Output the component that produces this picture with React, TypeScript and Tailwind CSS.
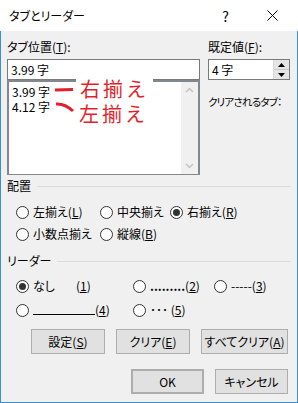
import React from "react";

const font = { fontFamily: '"Noto Sans CJK JP", "Noto Sans", sans-serif' };

function Radio({ checked = false }: { checked?: boolean }) {
  return (
    <span className="flex h-[13px] w-[13px] shrink-0 items-center justify-center rounded-full border border-[#333] bg-white">
      {checked && <span className="h-[7px] w-[7px] rounded-full bg-[#333]" />}
    </span>
  );
}

function Opt({ checked, children, className = "" }: { checked?: boolean; children: React.ReactNode; className?: string }) {
  return (
    <div className={`flex items-center gap-[4px] ${className}`}>
      <Radio checked={checked} />
      <span className="whitespace-nowrap">{children}</span>
    </div>
  );
}

function Btn({ children, className = "" }: { children: React.ReactNode; className?: string }) {
  return (
    <div className={`flex h-[25px] items-center justify-center whitespace-nowrap border border-[#adadad] bg-[#e1e1e1] ${className}`}>
      {children}
    </div>
  );
}

export default function App() {
  return (
    <div
      className="h-[403px] w-[298px] overflow-hidden bg-white text-[12px] leading-[16px] text-black [font-feature-settings:'palt']"
      style={font}
    >
      {/* === TITLE BAR === */}
      <div className="flex h-[31px] items-center bg-white pl-[9px]">
        <span className="text-[12px]">タブとリーダー</span>
        <span className="ml-auto mr-[38px] text-[14px]">?</span>
        <svg width="11" height="11" viewBox="0 0 11 11" className="mr-[20px]">
          <path d="M0.5 0.5 L10.5 10.5 M10.5 0.5 L0.5 10.5" stroke="#000" strokeWidth="1" />
        </svg>
      </div>

      {/* === BODY === */}
      <div className="relative h-[372px] border-x border-b border-[#3a8fd0] bg-[#f0f0f0] px-[6px]">
        <div className="flex pt-[8px]">
          {/* tab position */}
          <div className="w-[193px]">
            <div>
              タブ位置(<u>T</u>):
            </div>
            <div className="mt-[4px] flex h-[21px] items-center border border-[#7a7a7a] bg-white pl-[3px]">3.99 字</div>
            <div className="flex h-[95px] border-2 border-b border-[#828790] bg-white">
              <div className="flex-1 pl-[3px] pt-[2px] leading-[15px]">
                <div>3.99 字</div>
                <div>4.12 字</div>
              </div>
              <div className="flex w-[17px] flex-col items-center justify-between bg-[#f0f0f0] py-[5px]">
                <svg width="9" height="6" viewBox="0 0 9 6">
                  <path d="M1 5 L4.5 1.5 L8 5" stroke="#c2c2c2" strokeWidth="1.5" fill="none" />
                </svg>
                <svg width="9" height="6" viewBox="0 0 9 6">
                  <path d="M1 1 L4.5 4.5 L8 1" stroke="#c2c2c2" strokeWidth="1.5" fill="none" />
                </svg>
              </div>
            </div>
          </div>

          {/* default value */}
          <div className="ml-[8px] w-[82px]">
            <div>
              既定値(<u>F</u>):
            </div>
            <div className="mt-[4px] flex h-[21px] items-center border border-[#7a7a7a] bg-white pl-[3px]">
              <span className="flex-1">4 字</span>
              <div className="flex h-full w-[16px] flex-col border-l border-[#d9d9d9]">
                <div className="flex flex-1 items-center justify-center border-b border-[#c9c9c9] bg-[#e5e5e5]">
                  <svg width="7" height="4" viewBox="0 0 7 4">
                    <path d="M0 4 L3.5 0 L7 4Z" fill="#000" />
                  </svg>
                </div>
                <div className="flex flex-1 items-center justify-center bg-[#e5e5e5]">
                  <svg width="7" height="4" viewBox="0 0 7 4">
                    <path d="M0 0 L3.5 4 L7 0Z" fill="#000" />
                  </svg>
                </div>
              </div>
            </div>
            <div className="mt-[14px] whitespace-nowrap text-[10.5px] tracking-[-0.8px]">クリアされるタブ：</div>
          </div>
        </div>

        {/* annotations */}
        <div className="absolute left-[75px] top-[45px] bg-white px-[4px] text-[20px] leading-[25px] tracking-[3px] text-[#e31f2b] [font-feature-settings:normal]">
          右揃え
        </div>
        <div className="absolute left-[78px] top-[70px] text-[20px] leading-[25px] tracking-[3px] text-[#e31f2b] [font-feature-settings:normal]">
          左揃え
        </div>
        <svg className="absolute left-[47px] top-[55px]" width="32" height="30" viewBox="0 0 32 30">
          <path d="M7 4 L25 3.5" stroke="#e31f2b" strokeWidth="3" />
          <path d="M8 18 C14 17.5 19 19.5 25 25" stroke="#e31f2b" strokeWidth="3" fill="none" />
        </svg>

        {/* alignment */}
        <div className="mt-[3px] flex items-center">
          <span>配置</span>
          <span className="ml-[6px] h-px flex-1 bg-[#dcdcdc]" />
        </div>
        <div className="mt-[10px] grid grid-cols-[84px_70px_auto] gap-y-[6px] pl-[9px]">
          <Opt>
            左揃え(<u>L</u>)
          </Opt>
          <Opt>中央揃え</Opt>
          <Opt checked>
            右揃え(<u>R</u>)
          </Opt>
          <Opt>小数点揃え</Opt>
          <Opt>
            縦線(<u>B</u>)
          </Opt>
        </div>

        {/* leader */}
        <div className="mt-[11px] flex items-center">
          <span>リーダー</span>
          <span className="ml-[6px] h-px flex-1 bg-[#dcdcdc]" />
        </div>
        <div className="mt-[9px] grid grid-cols-[117px_81px_auto] gap-y-[8px] pl-[9px]">
          <Opt checked>
            なし<span className="ml-[21px]">(<u>1</u>)</span>
          </Opt>
          <Opt>
            <span className="font-bold">.........</span>(<u>2</u>)
          </Opt>
          <Opt>
            -----(<u>3</u>)
          </Opt>
          <Opt>
            <span className="inline-block w-[62px] border-b border-black align-baseline" />(<u>4</u>)
          </Opt>
          <Opt>
            ･･･ (<u>5</u>)
          </Opt>
        </div>

        {/* buttons */}
        <div className="mt-[11px] flex justify-end gap-[11px] pr-[3px]">
          <Btn className="w-[74px]">
            設定(<u>S</u>)
          </Btn>
          <Btn className="w-[74px]">
            クリア(<u>E</u>)
          </Btn>
          <Btn className="w-[87px]">
            すべてクリア(<u>A</u>)
          </Btn>
        </div>
        <div className="mt-[15px] flex justify-end gap-[11px] pr-[3px]">
          <Btn className="w-[73px] border-2 border-[#0078d7]">OK</Btn>
          <Btn className="w-[73px]">キャンセル</Btn>
        </div>
      </div>
    </div>
  );
}
